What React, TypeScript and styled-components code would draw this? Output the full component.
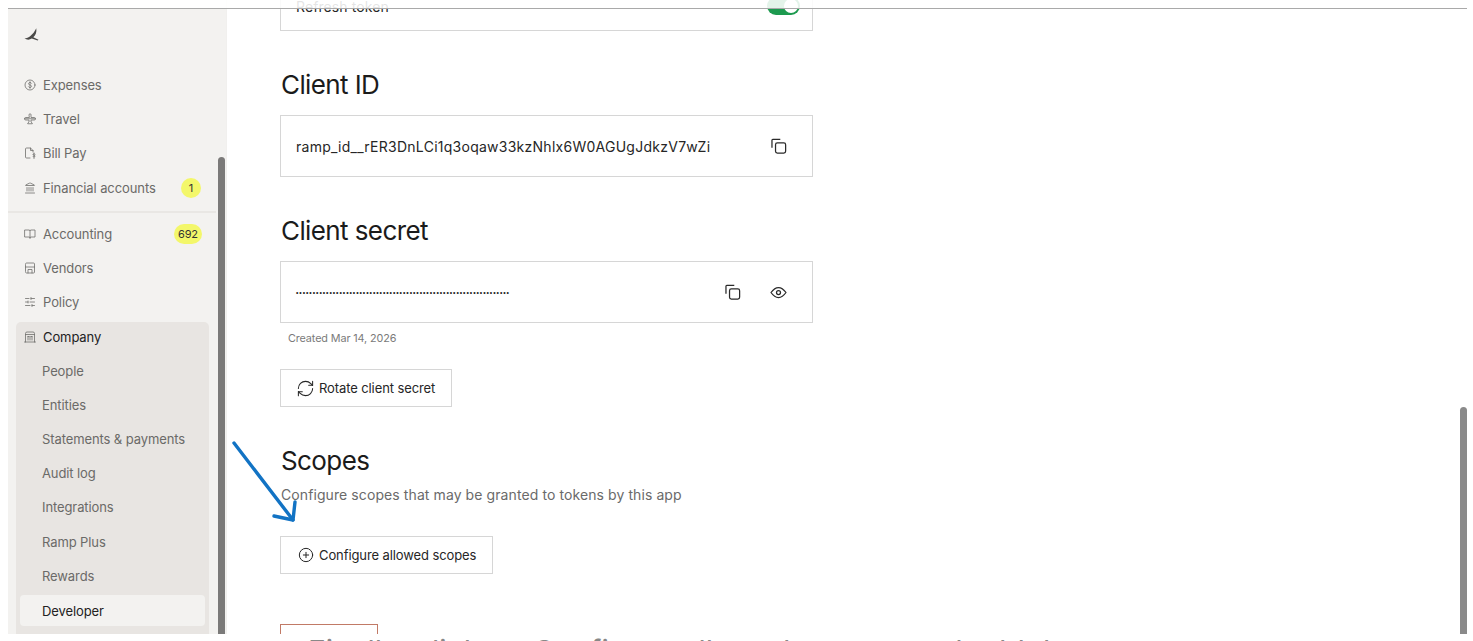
import React from "react";
import styled, { createGlobalStyle } from "styled-components";
import { RefreshCw, CirclePlus, Landmark, SlidersHorizontal } from "lucide-react";

const Global = createGlobalStyle`
  html, body { margin: 0; padding: 0; background: #fff; }
  body { font-family: Inter, "Liberation Sans", sans-serif; overflow: hidden; }
`;

const Page = styled.div`
  position: relative;
  width: 1473px;
  height: 641px;
  overflow: hidden;
  background: #fff;
`;

const TopRule = styled.div`
  position: absolute;
  top: 0;
  left: 8px;
  width: 1459px;
  height: 8px;
  background: rgba(255, 255, 255, 0.88);
  border-bottom: 1px solid #a9a9a9;
  z-index: 5;
`;

const Body = styled.div`
  display: flex;
  height: 634px;
  overflow: hidden;
`;

const Sidebar = styled.nav`
  flex: none;
  position: relative;
  box-sizing: border-box;
  width: 218px;
  height: 625px;
  margin: 9px 0 0 8px;
  background: #f3f2f0;
  overflow: hidden;
`;

const SidebarHead = styled.div`
  height: 59px;
  box-sizing: border-box;
  padding: 16px 0 0 16px;
  color: #4a4a48;
`;

const NavRow = styled.div<{ $active?: boolean }>`
  display: flex;
  align-items: center;
  gap: 7px;
  height: 34.2px;
  box-sizing: border-box;
  padding-left: 16px;
  padding-right: 24px;
  font-size: 13px;
  letter-spacing: -0.1px;
  color: ${(p) => (p.$active ? "#222" : "#6b6a68")};
`;

const NavIcon = styled.span`
  flex: none;
  display: flex;
  width: 12px;
  height: 12px;
  color: #6f6e6c;
  svg { width: 12px; height: 12px; }
`;

const NavLabel = styled.span`
  flex: 1;
  white-space: nowrap;
`;

const Badge = styled.span<{ $wide?: boolean }>`
  flex: none;
  display: flex;
  align-items: center;
  justify-content: center;
  height: 20px;
  width: ${(p) => (p.$wide ? "28px" : "20px")};
  margin-right: ${(p) => (p.$wide ? "0" : "1px")};
  border-radius: 10px;
  background: #f3f76a;
  color: #333;
  font-size: 11px;
  letter-spacing: -0.2px;
`;

const Divider = styled.div`
  height: 2px;
  width: 208px;
  margin: 6px 0 4px;
  background: #e9e7e4;
`;

const Group = styled.div`
  margin: 2.6px 0 0 8px;
  width: 193px;
  height: 320px;
  border-radius: 5px 5px 0 0;
  background: #e8e5e2;
`;

const GroupHead = styled(NavRow)`
  height: 31.6px;
  padding-left: 8px;
  padding-bottom: 2px;
  color: #222;
`;

const SubRow = styled(NavRow)`
  padding-left: 26px;
`;

const ActiveRow = styled(SubRow)`
  height: 31px;
  margin: 2.5px 4px 0;
  padding-left: 22px;
  border-radius: 4px;
  background: #f3f2f0;
`;

const SideThumb = styled.div`
  position: absolute;
  top: 148px;
  right: 1px;
  bottom: 0;
  width: 7px;
  border-radius: 4px 4px 0 0;
  background: #7b7a79;
`;

const Main = styled.main`
  flex: 1;
  box-sizing: border-box;
  padding-left: 53px;
  position: relative;
  border-left: 1px solid #f1f0ee;
`;

const Card = styled.div<{ $clipped?: boolean }>`
  display: flex;
  align-items: center;
  box-sizing: border-box;
  width: 533px;
  height: ${(p) => (p.$clipped ? "50px" : "62px")};
  margin-top: ${(p) => (p.$clipped ? "-19px" : "15px")};
  padding: 0 12px 0 15px;
  border: 1px solid #d6d6d6;
  color: #262626;
  font-size: 14px;
  letter-spacing: 0.1px;
`;

const CardText = styled.span`
  flex: 1;
  white-space: nowrap;
`;

const IdText = styled(CardText)`
  letter-spacing: 0.26px;
`;

const Dots = styled(CardText)`
  font-family: "Liberation Sans", sans-serif;
  font-size: 6.9px;
  letter-spacing: 0.93px;
  color: #222;
`;

const IconBtn = styled.span`
  flex: none;
  display: flex;
  align-items: center;
  justify-content: center;
  width: 16px;
  height: 16px;
  margin-left: 16px;
  margin-right: 14px;
  color: #2a2a2a;
  svg { flex: none; width: 19px; height: 19px; }
`;

const Toggle = styled.span`
  position: relative;
  flex: none;
  width: 33px;
  height: 18px;
  border-radius: 9px;
  background: #1d9a4f;
  &::after {
    content: "";
    position: absolute;
    top: 2px;
    right: 2px;
    width: 14px;
    height: 14px;
    border-radius: 50%;
    background: #fff;
  }
`;

const Heading = styled.h2<{ $top: number }>`
  margin: ${(p) => p.$top}px 0 0 1px;
  font-size: 26px;
  line-height: 31px;
  font-weight: 400;
  letter-spacing: -0.6px;
  color: #1b1b1b;
`;

const Caption = styled.div`
  margin: 9px 0 0 8px;
  font-size: 10.8px;
  line-height: 14px;
  letter-spacing: -0.1px;
  color: #7a7a7a;
`;

const Description = styled.p`
  margin: 9px 0 0 1px;
  font-size: 14px;
  line-height: 20px;
  letter-spacing: 0.09px;
  color: #6a6a6a;
`;

const Button = styled.button<{ $top: number }>`
  display: flex;
  align-items: center;
  gap: 4px;
  box-sizing: border-box;
  height: 38px;
  margin-top: ${(p) => p.$top}px;
  padding: 0 16px 0 15px;
  border: 1px solid #d6d6d6;
  background: #fff;
  color: #262626;
  font-family: inherit;
  font-size: 13px;
  letter-spacing: -0.1px;
`;

const ButtonIcon = styled.span`
  flex: none;
  display: flex;
  align-items: center;
  justify-content: center;
  width: 19px;
  height: 19px;
`;

const DangerButton = styled(Button)`
  width: 98px;
  border-color: #c17a66;
`;

const ArrowMark = styled.svg`
  position: absolute;
  left: 226px;
  top: 436px;
  width: 80px;
  height: 90px;
  z-index: 3;
`;

const MainThumb = styled.div`
  position: absolute;
  left: 1460px;
  top: 407px;
  width: 7px;
  height: 227px;
  border-radius: 4px 4px 0 0;
  background: #8a8a8a;
`;

const BottomStrip = styled.div`
  height: 7px;
  overflow: hidden;
  padding-left: 308px;
`;

const BottomText = styled.div`
  margin-top: -1px;
  font-size: 30px;
  line-height: 36px;
  white-space: nowrap;
  color: #888;
`;

const I = ({ children }: { children: React.ReactNode }) => (
  <svg viewBox="0 0 24 24" fill="none" stroke="currentColor" strokeWidth="1.6" strokeLinecap="round" strokeLinejoin="round">
    {children}
  </svg>
);

const DollarIcon = () => (
  <I>
    <circle cx="12" cy="12" r="10" />
    <path d="M15 8.500c-.6-1-1.600-1.500-3-1.500-1.700 0-3 .9-3 2.400s1.300 2.100 3 2.600 3 1.100 3 2.600-1.300 2.400-3 2.400c-1.400 0-2.400-.5-3-1.500M12 5.500v13" />
  </I>
);
const PlaneIcon = () => (
  <I>
    <path d="M10 3.500a2 2 0 0 1 4 0V9h6.500a2.500 2.500 0 0 1 0 5H14v4l2.500 2v1.500h-9V20l2.500-2v-4H3.500a2.500 2.500 0 0 1 0-5H10z" />
    <path d="M1 11.500h22" />
  </I>
);
const BillIcon = () => (
  <I>
    <path d="M12 22H5a2 2 0 0 1-2-2V4a2 2 0 0 1 2-2h8l5 5v3" />
    <path d="M13 2v5h5" />
    <path d="M22 14.500c-.5-.8-1.200-1-2-1-1.200 0-2 .6-2 1.500s.8 1.300 2 1.600 2 .8 2 1.700-.8 1.600-2 1.600c-.9 0-1.600-.3-2-1M20 12v11" />
  </I>
);
const BookIcon = () => (
  <I>
    <path d="M2 4h8a2 2 0 0 1 2 2 2 2 0 0 1 2-2h8v14h-8a2 2 0 0 0-2 2 2 2 0 0 0-2-2H2z" />
    <path d="M12 6v15" />
  </I>
);
const StoreIcon = () => (
  <I>
    <path d="M3 4a2 2 0 0 1 2-2h14a2 2 0 0 1 2 2v16a2 2 0 0 1-2 2H5a2 2 0 0 1-2-2z" />
    <path d="M3 10h18M8 22v-7h8v7" />
  </I>
);
const BuildingIcon = () => (
  <I>
    <path d="M3 22V5a3 3 0 0 1 3-3h12a3 3 0 0 1 3 3v17" />
    <path d="M1 22h22M3 7h18M8 11v7M12 11v7M16 11v7M8 11h2M14 11h2" />
  </I>
);
const WingLogo = () => (
  <svg width="15" height="13" viewBox="0 0 15 13" fill="currentColor">
    <path d="M0.500 10.500 C4.500 10.300 9 7 12.300 0.300 C12.800 4 11.700 7.300 9.300 9.300 L14.500 11.800 L13.600 12.600 L7.800 10.600 C5.500 12 2.800 12 0.500 10.500 Z" />
  </svg>
);
const CopyIcon = () => (
  <svg viewBox="0 0.500 16 16" fill="none" stroke="currentColor" strokeWidth="1.050" strokeLinejoin="round">
    <rect x="5.500" y="5.500" width="8.500" height="8.500" rx="1.500" />
    <path d="M2.500 9.500V3.200a.7.7 0 0 1 .7-.7h6.300" />
  </svg>
);
const EyeIcon = () => (
  <svg viewBox="0 0 19 19" fill="none" stroke="currentColor" strokeWidth="1.250" strokeLinejoin="round">
    <path d="M2 9.500 C4.500 6 7 4.500 9.500 4.500 S14.500 6 17 9.500 C14.500 13 12 14.500 9.500 14.500 S4.500 13 2 9.500 Z" />
    <circle cx="9.500" cy="9.500" r="2" />
  </svg>
);

const topRows = [
  { label: "Expenses", icon: <DollarIcon /> },
  { label: "Travel", icon: <PlaneIcon /> },
  { label: "Bill Pay", icon: <BillIcon /> },
  { label: "Financial accounts", icon: <Landmark strokeWidth={1.6} />, badge: "1" },
];
const midRows = [
  { label: "Accounting", icon: <BookIcon />, badge: "692" },
  { label: "Vendors", icon: <StoreIcon /> },
  { label: "Policy", icon: <SlidersHorizontal strokeWidth={1.6} /> },
];
const subRows = ["People", "Entities", "Statements & payments", "Audit log", "Integrations", "Ramp Plus", "Rewards"];

type Row = { label: string; icon: React.ReactNode; badge?: string };

const renderRow = (r: Row) => (
  <NavRow key={r.label}>
    <NavIcon>{r.icon}</NavIcon>
    <NavLabel>{r.label}</NavLabel>
    {r.badge && <Badge $wide={r.badge.length > 1}>{r.badge}</Badge>}
  </NavRow>
);

export default function App() {
  return (
    <Page>
      <Global />
      <TopRule />
      <Body>
        <Sidebar>
          <SidebarHead>
            <WingLogo />
          </SidebarHead>
          {topRows.map(renderRow)}
          <Divider />
          {midRows.map(renderRow)}
          <Group>
            <GroupHead>
              <NavIcon><BuildingIcon /></NavIcon>
              <NavLabel>Company</NavLabel>
            </GroupHead>
            {subRows.map((s) => (
              <SubRow key={s}><NavLabel>{s}</NavLabel></SubRow>
            ))}
            <ActiveRow $active><NavLabel>Developer</NavLabel></ActiveRow>
          </Group>
          <SideThumb />
        </Sidebar>
        <Main>
          <Card $clipped>
            <CardText>Refresh token</CardText>
            <Toggle />
          </Card>
          <Heading $top={38}>Client ID</Heading>
          <Card>
            <IdText>ramp_id__rER3DnLCi1q3oqaw33kzNhlx6W0AGUgJdkzV7wZi</IdText>
            <IconBtn><CopyIcon /></IconBtn>
          </Card>
          <Heading $top={38}>Client secret</Heading>
          <Card>
            <Dots>{"•".repeat(64)}</Dots>
            <IconBtn><CopyIcon /></IconBtn>
            <IconBtn><EyeIcon /></IconBtn>
          </Card>
          <Caption>Created Mar 14, 2026</Caption>
          <Button $top={23}><ButtonIcon><RefreshCw size={19} strokeWidth={1.3} /></ButtonIcon>Rotate client secret</Button>
          <Heading $top={38}>Scopes</Heading>
          <Description>Configure scopes that may be granted to tokens by this app</Description>
          <Button $top={31}><ButtonIcon><CirclePlus size={16} strokeWidth={1.5} /></ButtonIcon>Configure allowed scopes</Button>
          <DangerButton $top={50} />
        </Main>
      </Body>
      <BottomStrip>
        <BottomText>Finally, click on Configure allowed scopes and add the scopes</BottomText>
      </BottomStrip>
      <MainThumb />
      <ArrowMark viewBox="0 0 80 90" fill="none" stroke="#1273c4" strokeWidth="3.4" strokeLinecap="round" strokeLinejoin="round">
        <path d="M8 7 L67 84" />
        <path d="M48 80 L67 84 L69 66" />
      </ArrowMark>
    </Page>
  );
}
